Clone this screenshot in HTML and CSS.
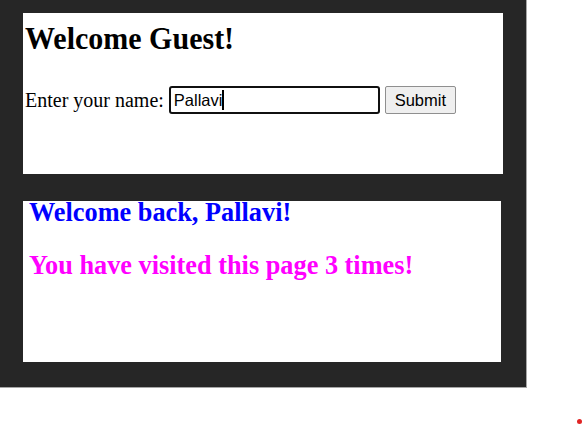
FILE: index.html
```html
<!DOCTYPE html>
<html>
<head>
<meta charset="utf-8">
<link rel="stylesheet" href="styles.css">
</head>
<body>
<div class="panel">
  <section class="card card-form">
    <h1 class="title">Welcome Guest!</h1>
    <form class="name-form">
      <label class="label" for="name">Enter your name:</label>
      <span class="input">Pallavi<span class="caret"></span></span>
      <button type="button" class="btn">Submit</button>
    </form>
  </section>
  <section class="card card-msg">
    <h2 class="back">Welcome back, Pallavi!</h2>
    <h2 class="visits">You have visited this page 3 times!</h2>
  </section>
</div>
<span class="dot"></span>
</body>
</html>
```

FILE: styles.css
```css
html, body {
  margin: 0;
  padding: 0;
  background: #ffffff;
}
body {
  width: 582px;
  height: 425px;
  position: relative;
  overflow: hidden;
  font-family: "Liberation Serif", "Times New Roman", serif;
}
.panel {
  box-sizing: border-box;
  width: 527px;
  height: 388px;
  background: #262626;
  border-right: 1px solid #a6a6a6;
  border-bottom: 1px solid #a6a6a6;
  padding: 13px 0 0 23px;
  display: flex;
  flex-direction: column;
  gap: 27px;
}
.card {
  background: #ffffff;
  box-sizing: border-box;
}
.card-form {
  width: 480px;
  height: 161px;
  padding: 10px 0 0 2px;
}
.card-msg {
  width: 478px;
  height: 161px;
  padding: 0 0 0 6px;
}
.title {
  margin: 0;
  font-size: 30px;
  font-weight: bold;
  color: #000;
  line-height: 34px;
  transform: scaleY(1.08);
  transform-origin: left bottom;
}
.name-form {
  margin-top: 29px;
  display: flex;
  align-items: center;
  height: 28px;
}
.label {
  font-size: 20px;
  color: #000;
  margin-right: 5px;
}
.input {
  box-sizing: border-box;
  width: 211px;
  height: 28px;
  border: 2px solid #101010;
  border-radius: 3px;
  font-family: "Liberation Sans", Arial, sans-serif;
  font-size: 16.5px;
  color: #000;
  padding: 0 0 0 3px;
  display: flex;
  align-items: center;
}
.caret {
  display: inline-block;
  width: 2px;
  height: 20px;
  background: #000;
}
.btn {
  box-sizing: border-box;
  margin-left: 5px;
  width: 71px;
  height: 28px;
  background: #efefef;
  border: 1px solid #8f8f8f;
  border-radius: 2px;
  font-family: "Liberation Sans", Arial, sans-serif;
  font-size: 16.5px;
  color: #000;
  padding: 0;
}
.back, .visits {
  margin: 0;
  font-size: 26.3px;
  font-weight: bold;
  line-height: 30px;
}
.back {
  color: #0000ff;
  margin-top: -3px;
}
.visits {
  color: #ff00ff;
  margin-top: 23px;
}
.dot {
  position: absolute;
  left: 577px;
  top: 419px;
  width: 5px;
  height: 5px;
  border-radius: 50%;
  background: #e02424;
}
```
